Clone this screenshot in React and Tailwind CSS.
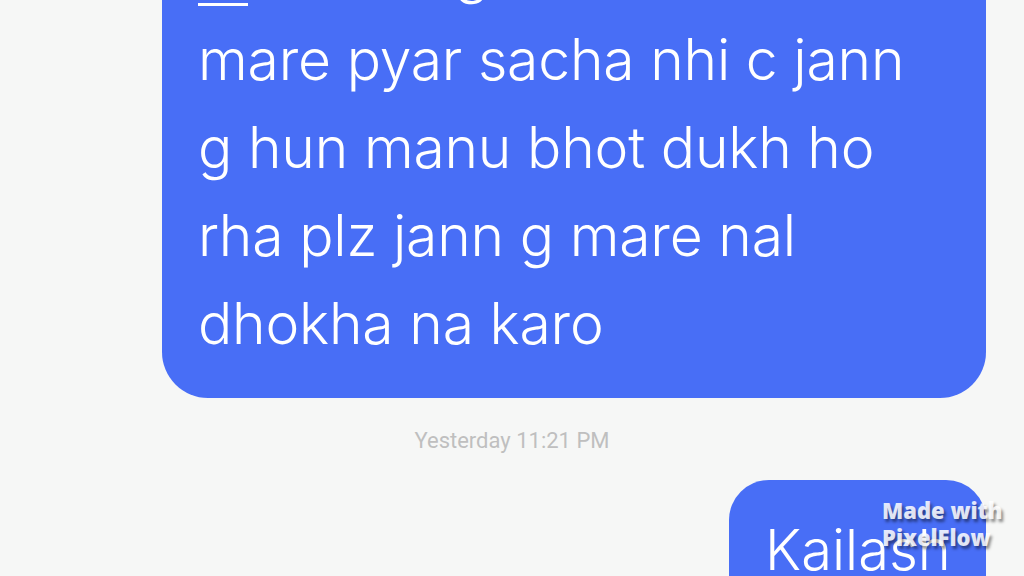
export default function App() {
  const lines = [
    "mare pyar sacha nhi c jann",
    "g hun manu bhot dukh ho",
    "rha plz jann g mare nal",
    "dhokha na karo",
  ];
  return (
    <div className="relative w-[1024px] h-[576px] overflow-hidden bg-[#f6f7f6]" style={{ fontFamily: "Inter, 'Liberation Sans', sans-serif" }}>
      <div className="flex flex-col">
        <div className="ml-[162px] w-[824px] -mt-[90px] rounded-[46px] bg-[#486ef6] pl-[36px] pr-[16px] pt-[18px] pb-[30px] text-white text-[57px] leading-[88px] font-light tracking-[-0.2px]">
          <div className="whitespace-pre">
            <span className="inline-block w-[50px] h-[3px] bg-white align-[-14px]"></span>
            {" sochdi g"}
          </div>
          {lines.map((l) => (
            <div key={l} className="whitespace-pre">{l}</div>
          ))}
        </div>
        <div className="mt-[30px] text-center text-[22px] leading-[26px] text-[#bfbfbf]" style={{ fontFamily: "Roboto, Inter, sans-serif" }}>Yesterday 11:21 PM</div>
        <div className="mt-[26px] ml-[729px] w-[257px] h-[140px] rounded-[40px] bg-[#486ef6] pl-[36px] pt-[40px] text-white text-[56px] leading-[60px] font-light">Kailash</div>
      </div>
      <div className="absolute left-[882px] top-[497px] text-[22px] leading-[27px] font-extrabold text-white/85 [text-shadow:2px_3px_3px_rgba(0,0,0,0.45)]" style={{ fontFamily: "'Open Sans', Lato, sans-serif" }}>
        <div>Made with</div>
        <div>PixelFlow</div>
      </div>
    </div>
  );
}
